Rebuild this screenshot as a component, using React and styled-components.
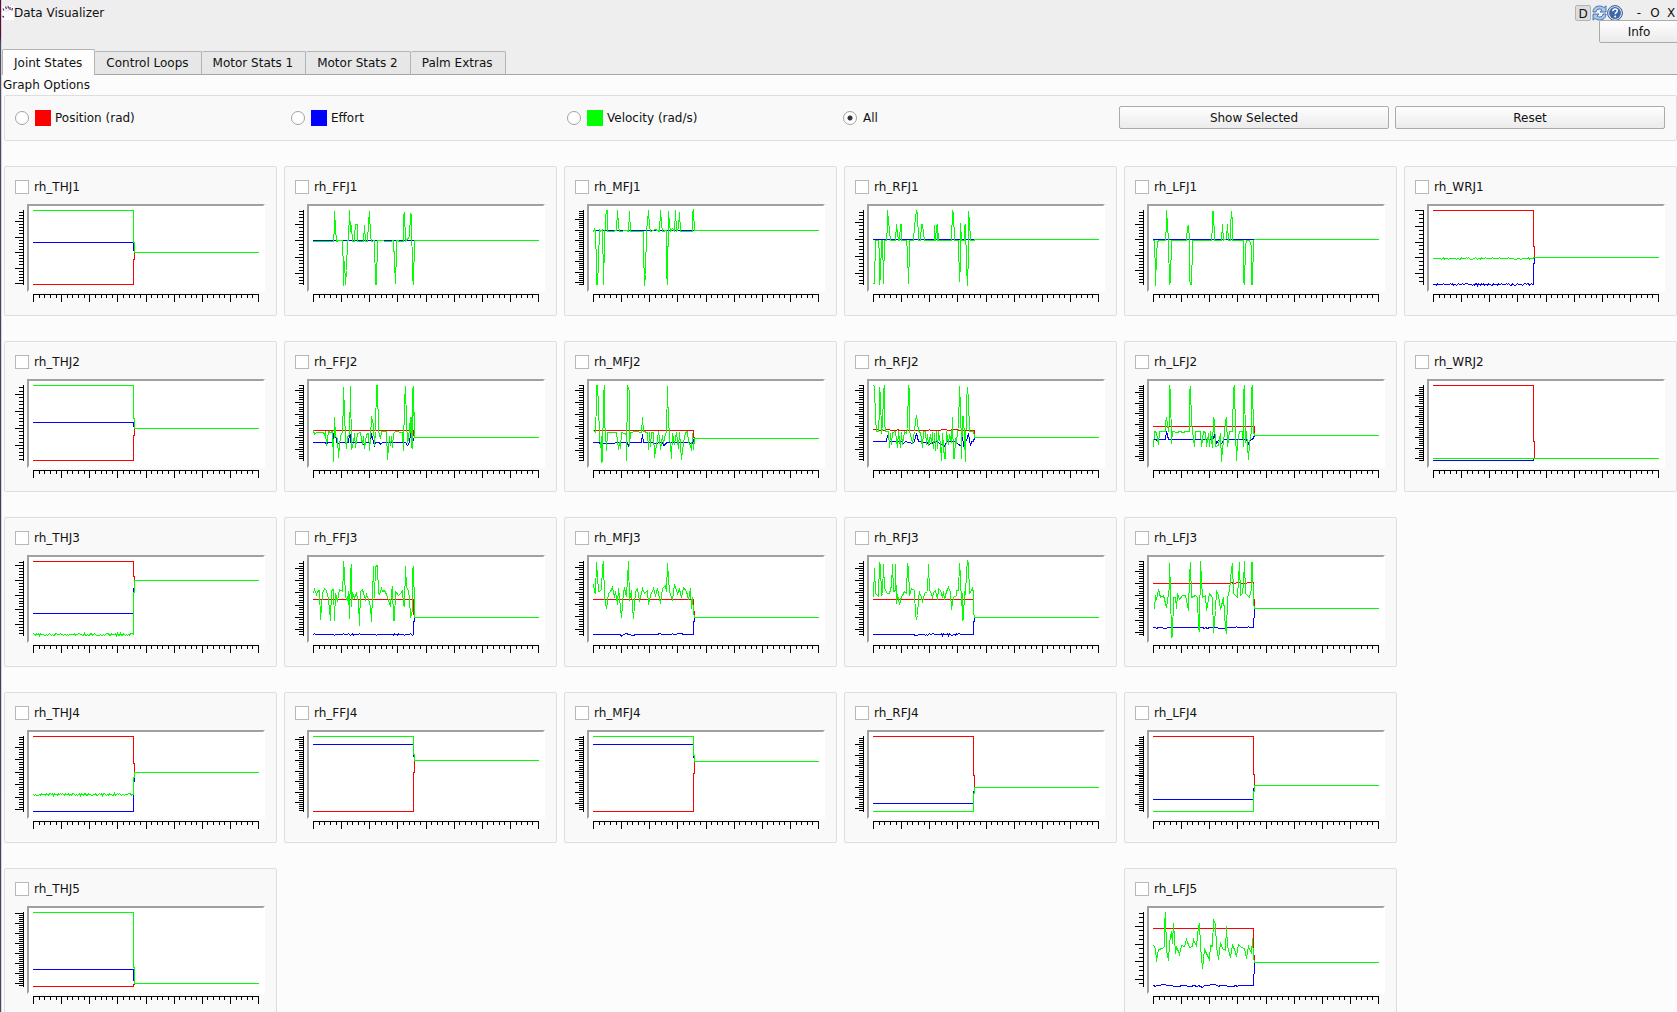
import React from "react";
import styled, { createGlobalStyle, css } from "styled-components";

const GlobalStyle = createGlobalStyle`
  *, *::before, *::after { box-sizing: border-box; }
  body {
    margin: 0;
    overflow: hidden;
    background: #fcfcfc;
    color: #111;
    font: 12px/16px "DejaVu Sans", sans-serif;
  }
  button, input { font: inherit; color: inherit; margin: 0; }
`;

const RED = "#ff0000";
const BLUE = "#0000ff";
const GREEN = "#00ff00";

/* ---------- recorded traces ---------- */

const noise = (i, seed) => {
  const v = Math.sin(i * 12.9898 + seed * 78.233) * 43758.5453;
  return v - Math.floor(v);
};

const wobble = (from, to, y, amp, density, seed) => {
  const pts = [];
  for (let x = from; x < to; x += 3) {
    const n = noise(x, seed);
    pts.push(x, n < density ? y + (n < density / 2 ? amp : -amp) : y);
  }
  return pts;
};

const drop = (y, end, x = 301) => {
  const mid = y + (end - y) * 0.77;
  return [x, y, x, mid, x + 3, mid, x + 3, end];
};

const steps = (r, b, g, end, rough = {}) => {
  const line = (y, key) =>
    rough[key] ? wobble(0, 300, y, 3, rough[key], y) : [0, y];
  return {
    span: [0, 678],
    top: 0,
    red: [...line(r, "r"), ...drop(r, end)],
    blue: [...line(b, "b"), ...drop(b, end)],
    green: [...line(g, "g"), ...drop(g, end), 678, end],
  };
};

const WIDE = [99, 777];
const MID = [61, 478];
const FAR = [1094, 1511];

const parse = (s) => s.trim().split(/\s+/).map(Number);

const trace = (span, top, red, blue, green) => ({
  span,
  top,
  red: Array.isArray(red) ? red : parse(red),
  blue: Array.isArray(blue) ? blue : parse(blue),
  green: parse(green),
});

const JOINTS = [
  { name: "rh_THJ1", col: 1, row: 1, ticks: [33, 46.5], data: steps(222, 96, 0, 126) },
  {
    name: "rh_FFJ1", col: 2, row: 1, ticks: [42, 49.3],
    data: trace(WIDE, 166, "99 256 402 256", "99 256 402 256",
      `99 259 160 259 161 218 163 168 165 218 167 259 174 257 187 257 188 345 190 392 193 318 196 389 198 345 200 257
       204 257 206 167 208 167 210 230 213 210 216 259 223 259 224 240 227 208 231 208 233 259 250 259 254 211 257 259
       263 259 265 205 268 169 271 245 273 259 283 257 286 387 289 387 292 257 330 259 341 257 345 385 348 290 350 257
       362 259 369 259 371 180 374 172 376 259 388 245 391 174 394 178 397 365 400 387 403 257 777 257`),
  },
  {
    name: "rh_MFJ1", col: 3, row: 1, ticks: [27, 31.5],
    data: trace(WIDE, 166, "99 226 402 226", "99 226 402 226",
      `99 229 103 223 106 229 107 332 109 388 112 388 114 318 116 223 121 229 127 223 128 368 130 388 132 262 134 189
       137 167 140 167 142 229 155 229 169 226 172 167 175 210 177 229 198 226 204 229 206 172 208 169 211 229 250 229
       251 280 254 391 257 357 259 229 262 200 264 167 267 215 272 229 286 224 298 229 301 166 303 205 306 229 318 226
       320 352 323 388 324 169 327 205 330 229 336 220 342 229 345 167 348 229 355 220 358 172 361 229 396 229 398 172
       400 167 403 226 777 226`),
  },
  {
    name: "rh_RFJ1", col: 4, row: 1, ticks: [36, 51],
    data: trace(WIDE, 166, "99 253 402 253", "99 253 402 253",
      `99 386 103 386 106 257 114 257 116 300 118 388 120 362 122 257 127 257 128 370 130 386 132 257 138 257 140 215
       142 166 145 200 149 257 166 257 169 208 173 257 178 257 179 208 182 208 184 257 198 257 201 290 204 386 206 290
       208 257 220 257 223 210 228 167 231 175 234 257 240 257 244 208 248 208 252 257 282 257 284 210 287 257 289 212
       291 255 292 208 296 257 334 257 337 167 340 175 342 257 355 257 358 380 360 322 362 205 365 257 372 257 374 212
       377 208 379 330 382 392 384 295 385 168 388 200 390 257 402 257 404 253 777 253`),
  },
  {
    name: "rh_LFJ1", col: 5, row: 1, ticks: [42, 46],
    data: trace(WIDE, 166, "99 253 402 253", "99 253 402 253",
      `99 256 103 257 104 358 106 391 108 302 111 259 118 257 136 257 137 205 139 167 142 208 145 257 148 388 151 375
       153 257 198 257 201 215 204 210 206 257 208 372 211 389 214 389 216 275 218 257 274 257 276 215 278 169 281 169
       283 257 304 257 307 208 311 257 318 250 321 208 324 257 330 257 332 215 335 169 337 200 338 257 369 257 371 375
       374 388 376 275 378 257 388 257 394 275 395 388 398 388 400 257 404 253 777 253`),
  },
  { name: "rh_WRJ1", col: 6, row: 1, ticks: [0, 47.3, 4], data: steps(0, 221, 144, 141, { b: 0.5, g: 0.3 }) },

  { name: "rh_THJ2", col: 1, row: 2, ticks: [27, 51], data: steps(225, 111, 0, 128) },
  {
    name: "rh_FFJ2", col: 2, row: 2, ticks: [15, 35.4],
    data: trace(WIDE, 691, "99 826 400 826 400 836 403 848",
      `99 862 134 862 138 868 142 862 158 862 160 836 164 836 168 862 175 866 180 862 203 862 206 836 209 840 211 862
       245 862 250 868 255 862 271 862 274 836 278 850 282 870 286 862 298 862 302 868 308 862 376 862 382 870 388 862
       392 836 396 862 400 850 404 848`,
      `99 826 103 838 108 832 128 832 133 838 135 832 139 870 144 828 150 832 156 828 160 919 163 787 166 845 170 850
       173 908 178 870 181 845 186 828 189 740 190 696 192 772 195 850 197 879 200 845 206 840 209 705 211 694 214 883
       220 862 223 835 227 878 231 835 240 832 247 868 250 845 254 880 258 838 264 835 268 886 272 850 275 784 279 810
       282 870 286 828 288 691 291 691 294 828 300 850 303 828 318 828 322 913 327 845 330 870 334 845 338 878 341 835
       346 828 366 832 370 886 374 740 376 694 378 800 381 862 386 850 391 787 393 878 396 700 398 880 400 694 402 840
       404 848 777 848`),
  },
  {
    name: "rh_MFJ2", col: 3, row: 2, ticks: [15, 36],
    data: trace(WIDE, 691, "99 826 400 826 400 844 404 851",
      `99 862 118 862 121 868 128 864 200 862 203 874 207 862 244 862 247 838 251 862 280 862 283 866 306 862 309 870
       316 868 320 862 388 862 394 868 400 856 404 851`,
      `99 826 106 832 107 740 109 691 112 691 114 752 116 845 120 878 122 845 124 921 127 919 129 720 131 691 133 800
       135 835 138 886 142 832 168 832 173 884 177 862 181 880 184 832 192 835 197 838 199 916 202 691 206 710 208 870
       211 832 230 830 244 832 247 787 251 830 262 832 265 883 268 832 271 874 275 832 280 832 284 908 288 870 294 830
       298 850 302 883 307 840 311 865 315 835 319 832 321 694 323 720 327 850 330 870 334 910 338 835 344 868 348 832
       354 880 358 832 365 914 370 862 375 832 382 830 386 862 391 870 394 886 396 835 400 883 402 851 777 851`),
  },
  {
    name: "rh_RFJ2", col: 4, row: 2, ticks: [15, 35.5],
    data: trace(WIDE, 691,
      `99 823 112 823 115 826 135 826 138 823 148 823 151 826 168 826 172 823 176 826 266 826 269 823 272 826 300 826
       303 823 318 823 321 826 345 823 360 826 402 826 404 848`,
      `99 859 138 859 142 842 146 859 184 859 190 866 196 859 218 866 224 859 229 835 234 859 262 862 266 868 290 859
       313 874 320 859 344 859 363 874 366 840 370 874 378 859 386 835 390 870 394 859 400 859 404 848`,
      `99 691 103 693 104 790 107 829 114 829 117 760 118 696 121 725 123 835 127 820 128 710 131 691 133 800 136 829
       144 829 146 878 149 835 152 868 156 832 164 829 170 878 175 829 179 878 182 832 187 868 192 829 198 835 200 820
       203 691 206 705 208 826 218 866 222 829 226 800 228 781 231 800 234 829 240 832 246 878 250 829 256 829 260 868
       263 838 266 870 270 838 273 866 277 832 281 880 284 835 287 886 289 829 293 880 296 829 300 868 304 916 308 835
       313 910 316 910 320 829 324 868 328 838 334 862 337 787 341 910 343 910 346 850 350 866 353 829 356 820 358 694
       360 757 363 880 364 910 368 784 370 784 373 850 376 919 380 740 382 697 385 737 388 829 400 829 402 845 404 848
       777 848`),
  },
  {
    name: "rh_LFJ2", col: 5, row: 2, ticks: [21, 32],
    data: trace(WIDE, 691, "99 814 402 814 402 836 404 841",
      `99 853 108 853 112 859 118 853 134 853 139 829 143 853 278 853 282 840 288 866 296 856 304 866 312 853 380 853
       385 866 390 853 398 853 404 841`,
      `99 874 102 829 108 832 113 868 118 829 134 829 136 802 139 787 144 829 147 800 148 691 150 712 152 865 157 829
       170 832 176 829 190 832 196 829 207 829 208 708 211 694 214 802 218 829 223 874 227 829 240 829 244 874 249 829
       256 832 260 874 264 835 268 874 272 829 276 878 280 787 283 796 286 874 295 871 300 835 304 919 308 880 312 835
       316 796 319 787 321 874 327 829 338 829 340 700 342 691 345 829 349 916 353 862 358 829 366 829 370 874 371 712
       374 691 376 862 380 829 385 913 389 862 393 829 395 700 397 691 400 829 404 841 777 841`),
  },
  { name: "rh_WRJ2", col: 6, row: 2, ticks: [30, 31.5], data: steps(0, 225, 219, 219) },

  { name: "rh_THJ3", col: 1, row: 3, ticks: [13, 44], data: steps(0, 157, 219, 57, { g: 0.6 }) },
  {
    name: "rh_FFJ3", col: 2, row: 3, ticks: [21, 36.6],
    data: trace(WIDE, 154, "99 268 400 268 400 306 403 322",
      [...wobble(99, 399, 373, 3, 0.2, 4), 400, 373, 400, 334, 403, 334, 403, 322],
      `99 248 103 238 107 253 112 244 118 240 121 328 125 250 133 234 139 240 144 268 149 332 153 240 158 238 163 331
       166 250 172 275 176 238 185 244 188 185 190 154 192 185 195 262 200 270 203 245 206 325 209 185 212 162 214 290
       218 250 224 262 229 250 234 275 238 346 242 245 247 238 251 250 255 268 260 253 265 268 270 290 275 334 279 175
       281 168 284 262 287 168 292 166 295 250 298 253 304 234 307 245 314 240 320 252 326 270 330 290 334 245 337 230
       341 331 344 331 347 245 354 256 360 250 366 240 370 285 374 290 376 169 380 230 384 245 389 262 392 322 396 300
       398 180 400 169 402 288 404 322 777 322`),
  },
  {
    name: "rh_MFJ3", col: 3, row: 3, ticks: [18, 37],
    data: trace(MID, 154, "61 268 246 268 246 284 248 322",
      "61 373 111 373 113 378 116 373 122 370 126 373 135 376 138 373 180 373 184 370 188 373 205 373 207 370 210 373 225 370 228 373 246 373 246 334 248 334 248 322",
      `61 222 63 245 65 250 67 156 69 200 71 245 75 240 78 170 80 154 82 262 86 296 89 250 93 244 96 232 99 262
       102 244 106 283 108 234 113 322 116 245 119 235 123 260 125 154 127 270 131 240 134 290 136 325 138 245 142 236
       147 275 151 235 156 250 162 240 163 283 166 256 172 235 176 256 180 235 185 280 188 235 194 226 196 245 198 160
       201 244 205 262 208 270 212 224 216 250 220 238 224 262 228 232 233 245 237 268 240 235 242 295 244 262 246 305
       248 322 478 322`),
  },
  {
    name: "rh_RFJ3", col: 4, row: 3, ticks: [21, 36.6],
    data: trace(WIDE, 154, "99 268 400 268 400 306 403 322",
      [...wobble(99, 220, 373, 3, 0.05, 2), 226, 376, 232, 376, 235, 373, ...wobble(240, 380, 373, 3, 0.35, 6), 400, 373, 400, 334, 403, 334, 403, 322],
      `99 260 102 175 106 250 113 260 117 157 120 165 123 256 127 250 130 162 133 235 140 250 148 250 154 225 156 163
       160 244 164 240 166 163 169 280 172 252 176 284 182 260 187 256 192 245 198 250 202 160 205 175 208 256 212 235
       222 240 226 316 229 325 232 316 235 265 238 247 243 262 247 278 252 250 262 244 264 163 268 240 272 244 277 262
       280 247 286 240 292 268 296 235 302 240 306 262 310 245 314 268 318 245 325 233 330 247 335 298 340 262 348 256
       350 240 356 240 358 160 360 200 363 285 366 250 367 331 370 328 373 245 377 252 380 185 382 154 385 160 389 250
       394 240 398 233 400 250 401 305 404 322 777 322`),
  },
  {
    name: "rh_LFJ3", col: 5, row: 3, ticks: [30, 36.6],
    data: trace(FAR, 154, "1094 220 1236 220 1239 217 1242 220 1254 217 1258 220 1279 217 1279 238 1281 295",
      "1094 352 1098 352 1100 355 1103 352 1118 355 1120 352 1185 352 1188 355 1191 352 1194 355 1197 352 1228 355 1232 352 1246 352 1248 349 1250 352 1268 352 1270 349 1272 352 1279 352 1281 295",
      `1095 296 1097 256 1100 268 1104 238 1107 262 1112 256 1118 292 1121 250 1123 230 1124 160 1126 240 1127 382
       1129 378 1131 262 1134 262 1137 296 1139 250 1143 268 1148 256 1154 256 1158 302 1160 200 1162 157 1164 262
       1172 256 1176 262 1178 355 1180 365 1181 154 1184 262 1190 256 1193 302 1197 250 1203 262 1206 368 1208 300
       1211 240 1215 256 1219 298 1224 262 1228 355 1230 370 1232 262 1235 240 1238 175 1240 160 1242 250 1250 262
       1253 157 1256 256 1259 250 1261 220 1263 154 1265 250 1272 262 1275 235 1276 157 1278 157 1279 280 1281 295
       1511 295`),
  },

  { name: "rh_THJ4", col: 1, row: 4, ticks: [32, 37.6], data: steps(0, 225, 174, 107, { g: 0.6 }) },
  { name: "rh_FFJ4", col: 2, row: 4, ticks: [9, 31.5], data: steps(225, 24, 0, 72) },
  { name: "rh_MFJ4", col: 3, row: 4, ticks: [9, 32], data: steps(225, 24, 0, 75) },
  { name: "rh_RFJ4", col: 4, row: 4, ticks: [24, 32], data: steps(0, 201, 225, 153) },
  { name: "rh_LFJ4", col: 5, row: 4, ticks: [27, 29.5], data: steps(0, 189, 225, 147) },

  { name: "rh_THJ5", col: 1, row: 5, ticks: [3, 30], data: steps(223, 171, 0, 214) },
  {
    name: "rh_LFJ5", col: 5, row: 5, ticks: [42, 53, 4],
    data: trace(FAR, 1207, "1094 1255 1279 1255 1279 1310 1281 1357",
      "1094 1426 1097 1429 1100 1426 1116 1423 1119 1426 1142 1429 1146 1426 1164 1429 1168 1426 1175 1429 1178 1426 1185 1432 1188 1426 1208 1423 1214 1429 1218 1426 1242 1429 1246 1426 1249 1429 1252 1426 1279 1426 1281 1357",
      `1094 1306 1097 1315 1100 1355 1104 1318 1110 1315 1114 1310 1115 1243 1117 1207 1119 1320 1121 1352 1124 1300
       1127 1264 1129 1300 1131 1240 1134 1330 1137 1310 1142 1334 1146 1306 1151 1310 1156 1288 1160 1312 1166 1310
       1169 1288 1174 1310 1178 1250 1180 1240 1182 1310 1185 1376 1188 1318 1193 1330 1198 1348 1200 1306 1204 1310
       1206 1228 1208 1243 1210 1310 1215 1348 1218 1296 1222 1315 1227 1320 1229 1249 1231 1310 1237 1342 1241 1306
       1244 1318 1248 1340 1252 1303 1257 1312 1262 1315 1266 1345 1270 1310 1275 1330 1278 1284 1279 1340 1281 1357
       1511 1357`),
  },
];

/* ---------- window frame ---------- */

const Window = styled.div`
  display: grid;
  grid-template-columns: 1px 1fr;
  min-height: 100vh;
`;

const DesktopEdge = styled.div`
  background: linear-gradient(#5e0a35 0 38px, #4a4f63 42px, #39425a 50%, #454b5c);
`;

const Body = styled.main`
  min-width: 0;
  border-left: 1px solid #d4d4d6;
`;

const Header = styled.header`
  display: flex;
  flex-direction: column;
  background: #eeeeee;
  border-bottom: 1px solid #a6a6a6;
`;

const TitleBar = styled.div`
  display: flex;
  align-items: center;
  justify-content: space-between;
  height: 20px;
  padding-top: 6px;
`;

const Title = styled.h1`
  display: flex;
  align-items: center;
  margin: 0;
  font-size: 12px;
  font-weight: normal;
`;

const HandIcon = styled.svg`
  width: 12px;
  height: 14px;
  background: #fff;
`;

const WindowControls = styled.div`
  display: flex;
  align-items: center;
  height: 16px;
  margin-right: -2px;
`;

const ToolButton = styled.button`
  display: grid;
  place-items: center;
  width: 16px;
  height: 16px;
  padding: 0;
  border: ${(p) => (p.$raised ? "1px solid #b4b4b4" : "0")};
  border-radius: 2px;
  background: ${(p) => (p.$raised ? "#dcdcdc" : "transparent")};
`;

const WindowButtons = styled.div`
  display: flex;
  padding-left: 8px;
`;

const InfoRow = styled.div`
  display: flex;
  justify-content: flex-end;
  margin-right: -2px;
`;

const buttonFace = css`
  height: 23px;
  padding: 0 8px;
  border: 1px solid #ababab;
  border-radius: 2px;
  background: linear-gradient(#fefefe, #ebebeb);
`;

const PushButton = styled.button`
  ${buttonFace}
  width: ${(p) => (p.$compact ? "80px" : "100%")};
`;

const TabList = styled.div`
  display: flex;
  align-items: flex-end;
  height: 31px;
`;

const Tab = styled.button`
  height: ${(p) => (p.$active ? "26px" : "23px")};
  margin-bottom: ${(p) => (p.$active ? "-1px" : "0")};
  padding: 0 12px 0 11px;
  border: 1px solid #b4b4b4;
  border-bottom: 0;
  border-left-width: ${(p) => (p.$active ? "1px" : "0")};
  border-radius: 2px 2px 0 0;
  background: ${(p) => (p.$active ? "linear-gradient(#ffffff, #fcfcfc)" : "linear-gradient(#e8e8e8, #e6e6e6)")};
  white-space: nowrap;
`;

/* ---------- options ---------- */

const Section = styled.section`
  padding-top: 2px;
`;

const SectionTitle = styled.h2`
  margin: 0 0 2px;
  padding-left: 1px;
  font-size: 12px;
  font-weight: normal;
`;

const SectionBody = styled.div`
  padding-left: 2px;
`;

const frame = css`
  border: 1px solid #dedede;
  border-radius: 2px;
  background: #f9f9f9;
`;

const Options = styled.div`
  ${frame}
  display: grid;
  grid-template-columns: repeat(6, 1fr);
  align-items: center;
  gap: 6px;
  padding: 10px 11px 11px 10px;
`;

const OptionLabel = styled.label`
  display: flex;
  align-items: center;
`;

const Radio = styled.input`
  appearance: none;
  width: 14px;
  height: 14px;
  margin-right: 6px;
  border: 1px solid #a2a2a2;
  border-radius: 50%;
  background: #fff;
  &:checked {
    background: radial-gradient(circle, #333 0 2px, #fff 3px);
  }
`;

const Swatch = styled.span`
  width: 16px;
  height: 16px;
  margin-right: 4px;
  background: ${(p) => p.$color};
`;

/* ---------- joints ---------- */

const JointGrid = styled.div`
  display: grid;
  grid-template-columns: repeat(6, 1fr);
  grid-auto-rows: 150px 151px;
  gap: 25px 7px;
  padding-top: 25px;
`;

const Card = styled.article`
  ${frame}
  grid-column: ${(p) => p.$col};
  grid-row: ${(p) => p.$row};
  display: flex;
  flex-direction: column;
  gap: 9px;
  min-width: 0;
  padding: 12px 11px 0 10px;
`;

const JointLabel = styled.label`
  display: flex;
  align-items: center;
  gap: 5px;
`;

const CheckBox = styled.input`
  appearance: none;
  width: 14px;
  height: 14px;
  border: 1px solid #b8b8b8;
  background: #fff;
  &:checked {
    background: #666;
    box-shadow: inset 0 0 0 2px #fff;
  }
`;

const ChartGrid = styled.div`
  display: grid;
  grid-template-columns: 9px 1fr;
  gap: 2px 3px;
`;

const PlotFrame = styled.div`
  height: ${(p) => p.$height}px;
  border: 2px solid;
  border-color: #a0a0a0 #fff #fff #a0a0a0;
  background: #fff;
`;

const Drawing = styled.svg`
  display: block;
  width: 100%;
  height: 100%;
  fill: none;
  shape-rendering: crispEdges;
  stroke-linecap: ${(p) => (p.$trace ? "square" : "butt")};
  path { vector-effect: non-scaling-stroke; stroke-width: 1px; }
`;

const XScale = styled.div`
  grid-column: 2;
  height: 8px;
`;

const toPath = (pts, { span: [left, right], top }) => {
  let d = "";
  for (let i = 0; i < pts.length; i += 2) {
    const x = Math.round(((pts[i] - left) / (right - left)) * 225) + 4.5;
    const y = Math.round((pts[i + 1] - top) / 3) + 4.5;
    d += `${i ? "L" : "M"}${x} ${y}`;
  }
  return d;
};

const yTicks = ([first, step, parts = 5], range) => {
  let d = `M8.5 6V${range + 7}`;
  const minor = step / parts;
  const before = Math.floor(first / minor);
  for (let k = -before; first + k * minor <= range * 3 + 1; k += 1) {
    const y = Math.round((first + k * minor) / 3) + 6.5;
    d += `M${k % parts === 0 ? 0 : 4} ${y}H9`;
  }
  return d;
};

const xTicks = () => {
  let d = "M6 0.5H232";
  for (let k = 0; k <= 40; k += 1) {
    const x = Math.round((k * 225) / 40) + 6.5;
    d += `M${x} 0V${k % 5 === 0 ? 8 : 4}`;
  }
  return d;
};

function Chart({ data, ticks, range }) {
  const height = range + 14;
  return (
    <ChartGrid>
      <Drawing viewBox={`0 0 9 ${height}`} preserveAspectRatio="none" aria-hidden="true">
        <path d={yTicks(ticks, range)} stroke="#000" />
      </Drawing>
      <PlotFrame $height={height}>
        <Drawing $trace viewBox={`0 0 234 ${height - 4}`} preserveAspectRatio="none" aria-hidden="true">
          <path d={toPath(data.red, data)} stroke={RED} />
          <path d={toPath(data.blue, data)} stroke={BLUE} />
          <path d={toPath(data.green, data)} stroke={GREEN} />
        </Drawing>
      </PlotFrame>
      <XScale>
        <Drawing viewBox="0 0 238 8" preserveAspectRatio="none" aria-hidden="true">
          <path d={xTicks()} stroke="#000" />
        </Drawing>
      </XScale>
    </ChartGrid>
  );
}

function JointCard({ joint }) {
  return (
    <Card $col={joint.col} $row={joint.row}>
      <JointLabel>
        <CheckBox type="checkbox" />
        {joint.name}
      </JointLabel>
      <Chart data={joint.data} ticks={joint.ticks} range={joint.row % 2 ? 74 : 75} />
    </Card>
  );
}

const RefreshIcon = () => (
  <svg width="15" height="16" viewBox="0 0 15 16" aria-hidden="true">
    <path d="M1 7C1 3 4 1 7.5 1C9.6 1 11 1.6 12 2.6L14 .8V7H8L10 5C9 4.2 8.2 4 7.3 4C5.3 4 4.2 5.200 4 7Z" fill="#a9c6e8" stroke="#3a6ba8" strokeWidth=".9" />
    <path d="M14 9C14 13 11 15 7.500 15C5.400 15 4 14.400 3 13.400L1 15.200V9H7L5 11C6 11.800 6.800 12 7.700 12C9.700 12 10.800 10.800 11 9Z" fill="#a9c6e8" stroke="#3a6ba8" strokeWidth=".9" />
  </svg>
);

const HelpIcon = () => (
  <svg width="16" height="16" viewBox="0 0 16 16" aria-hidden="true">
    <circle cx="8" cy="8" r="7.400" fill="#dfe8f4" stroke="#31588f" strokeWidth="1" />
    <circle cx="8" cy="8" r="5.900" fill="#3c66a8" />
    <path d="M5.800 6.300C5.900 4.700 6.900 4 8.100 4C9.400 4 10.300 4.800 10.300 5.900C10.300 7.400 8.200 7.500 8.200 9.300" fill="none" stroke="#fff" strokeWidth="1.500" />
    <circle cx="8.200" cy="11.400" r="1" fill="#fff" />
  </svg>
);

const Hand = () => (
  <HandIcon viewBox="0 0 12 14" aria-hidden="true">
    <g fill="none" stroke="#5b2a66" strokeWidth="1.200">
      <path d="M1 2.500L2 4.500M3.500 .5L4.500 3M6 0L6.500 2.500M8 1V4M10.500 2L9.800 4.500M.5 10L2 11.500" />
    </g>
    <path d="M3.500 4.500L4.500 5.500M6 3.500V5" stroke="#b9a0c0" strokeWidth=".8" />
  </HandIcon>
);

const TABS = ["Joint States", "Control Loops", "Motor Stats 1", "Motor Stats 2", "Palm Extras"];

const SERIES = [
  { label: "Position (rad)", color: RED },
  { label: "Effort", color: BLUE },
  { label: "Velocity (rad/s)", color: GREEN },
  { label: "All" },
];

export default function App() {
  return (
    <Window>
      <GlobalStyle />
      <DesktopEdge />
      <Body>
        <Header>
          <TitleBar>
            <Title>
              <Hand />
              Data Visualizer
            </Title>
            <WindowControls>
              <ToolButton $raised>D</ToolButton>
              <ToolButton aria-label="Reload"><RefreshIcon /></ToolButton>
              <ToolButton aria-label="Help"><HelpIcon /></ToolButton>
              <WindowButtons>
                <ToolButton>-</ToolButton>
                <ToolButton>O</ToolButton>
                <ToolButton>X</ToolButton>
              </WindowButtons>
            </WindowControls>
          </TitleBar>
          <InfoRow>
            <PushButton $compact>Info</PushButton>
          </InfoRow>
          <TabList role="tablist">
            {TABS.map((name, i) => (
              <Tab key={name} role="tab" aria-selected={i === 0} $active={i === 0}>
                {name}
              </Tab>
            ))}
          </TabList>
        </Header>
        <Section>
          <SectionTitle>Graph Options</SectionTitle>
          <SectionBody>
            <Options>
              {SERIES.map(({ label, color }) => (
                <OptionLabel key={label}>
                  <Radio type="radio" name="series" defaultChecked={!color} />
                  {color && <Swatch $color={color} />}
                  {label}
                </OptionLabel>
              ))}
              <PushButton>Show Selected</PushButton>
              <PushButton>Reset</PushButton>
            </Options>
            <JointGrid>
              {JOINTS.map((joint) => (
                <JointCard key={joint.name} joint={joint} />
              ))}
            </JointGrid>
          </SectionBody>
        </Section>
      </Body>
    </Window>
  );
}
